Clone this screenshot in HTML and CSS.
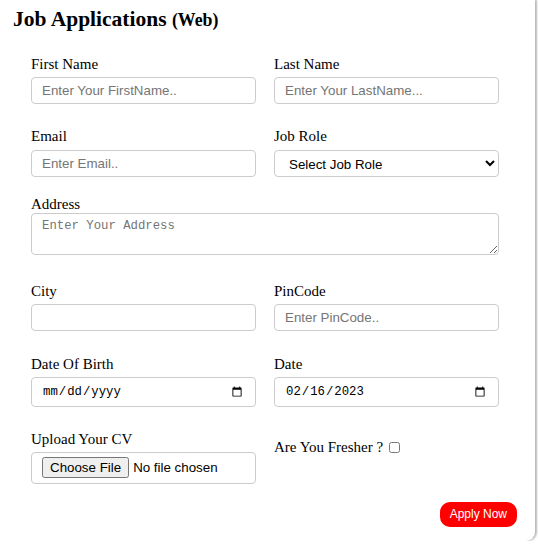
FILE: index.html
```html
<!DOCTYPE html>
<html>
<head>
<meta charset="utf-8">
<title>Job Applications</title>
<link rel="stylesheet" href="styles.css">
</head>
<body>
<div class="card">
  <h2 class="title">Job Applications <span class="sub">(Web)</span></h2>
  <form class="form">
    <div class="row row1">
      <div class="field">
        <label class="lbl">First Name</label>
        <input class="ctl" type="text" placeholder="Enter Your FirstName..">
      </div>
      <div class="field">
        <label class="lbl">Last Name</label>
        <input class="ctl" type="text" placeholder="Enter Your LastName...">
      </div>
    </div>
    <div class="row row2">
      <div class="field">
        <label class="lbl lbl-email">Email</label>
        <input class="ctl" type="email" placeholder="Enter Email..">
      </div>
      <div class="field">
        <label class="lbl lbl-email">Job Role</label>
        <select class="ctl sel">
          <option>Select Job Role</option>
        </select>
      </div>
    </div>
    <div class="row row3">
      <div class="field wide">
        <label class="lbl lbl-tight">Address</label>
        <textarea class="ctl area" placeholder="Enter Your Address"></textarea>
      </div>
    </div>
    <div class="row row4">
      <div class="field">
        <label class="lbl">City</label>
        <input class="ctl" type="text">
      </div>
      <div class="field">
        <label class="lbl">PinCode</label>
        <input class="ctl" type="text" placeholder="Enter PinCode..">
      </div>
    </div>
    <div class="row row5">
      <div class="field">
        <label class="lbl">Date Of Birth</label>
        <input class="ctl date" type="date">
      </div>
      <div class="field">
        <label class="lbl">Date</label>
        <input class="ctl date" type="date" value="2023-02-16">
      </div>
    </div>
    <div class="row row6">
      <div class="field">
        <label class="lbl">Upload Your CV</label>
        <input class="ctl file" type="file">
      </div>
      <div class="field">
        <label class="lbl fresher">Are You Fresher ? <input class="chk" type="checkbox"></label>
      </div>
    </div>
    <div class="actions">
      <button class="apply" type="button">Apply Now</button>
    </div>
  </form>
</div>
</body>
</html>
```

FILE: styles.css
```css
html, body {
  margin: 0;
  padding: 0;
  background: #ffffff;
}

body {
  font-family: "Liberation Serif", "Times New Roman", serif;
  color: #000;
}

.card {
  box-sizing: border-box;
  width: 535px;
  height: 541px;
  padding: 7px 18px 0 13px;
  background: #ffffff;
  border-radius: 0 0 9px 0;
  box-shadow: 2px 0 2px rgba(0, 0, 0, 0.28);
}

.title {
  margin: 0;
  font-size: 21.5px;
  line-height: 24px;
  font-weight: bold;
}

.sub {
  font-size: 17.8px;
}

.form {
  margin: 0;
  padding-left: 18px;
}

.row {
  display: grid;
  grid-template-columns: 225px 225px;
  column-gap: 18px;
  align-items: start;
}

.row1 { margin-top: 24px; }
.row2 { margin-top: 24px; }
.row3 { margin-top: 19px; }
.row4 { margin-top: 28px; }
.row5 { margin-top: 25px; }
.row6 { margin-top: 24px; }

.field {
  display: flex;
  flex-direction: column;
}

.wide {
  grid-column: 1 / 3;
}

.lbl {
  display: block;
  font-size: 15px;
  line-height: 17px;
  margin-bottom: 4px;
}

.lbl-email { margin-bottom: 5px; }
.lbl-tight { margin-bottom: 0; }

.ctl {
  display: block;
  box-sizing: border-box;
  width: 225px;
  height: 27px;
  margin: 0;
  padding: 5px 10px;
  border: 1px solid #cccccc;
  border-radius: 4px;
  background: #ffffff;
  font-family: "Liberation Sans", Arial, sans-serif;
  font-size: 13.33px;
  color: #000;
}

.ctl::placeholder {
  color: #757575;
}

.sel {
  color: #000;
}

.area {
  width: 468px;
  height: 42px;
  font-family: "Liberation Mono", "DejaVu Sans Mono", monospace;
  font-size: 12.3px;
  line-height: 15px;
  resize: both;
}

.date {
  height: 30px;
  font-family: "Liberation Mono", "DejaVu Sans Mono", monospace;
  font-size: 12.3px;
}

.file {
  height: 32px;
  padding: 4px 10px;
}

.fresher {
  margin-top: 8px;
  margin-bottom: 0;
}

.chk {
  width: 11px;
  height: 11px;
  margin: 0 0 0 2px;
  vertical-align: -1px;
}

.actions {
  display: flex;
  justify-content: flex-end;
  margin-top: 18px;
}

.apply {
  height: 25px;
  padding: 0 10px;
  border: none;
  border-radius: 10px;
  background: #ff0000;
  color: #ffffff;
  font-family: "Liberation Sans", Arial, sans-serif;
  font-size: 12px;
  line-height: 25px;
  cursor: pointer;
}
```
